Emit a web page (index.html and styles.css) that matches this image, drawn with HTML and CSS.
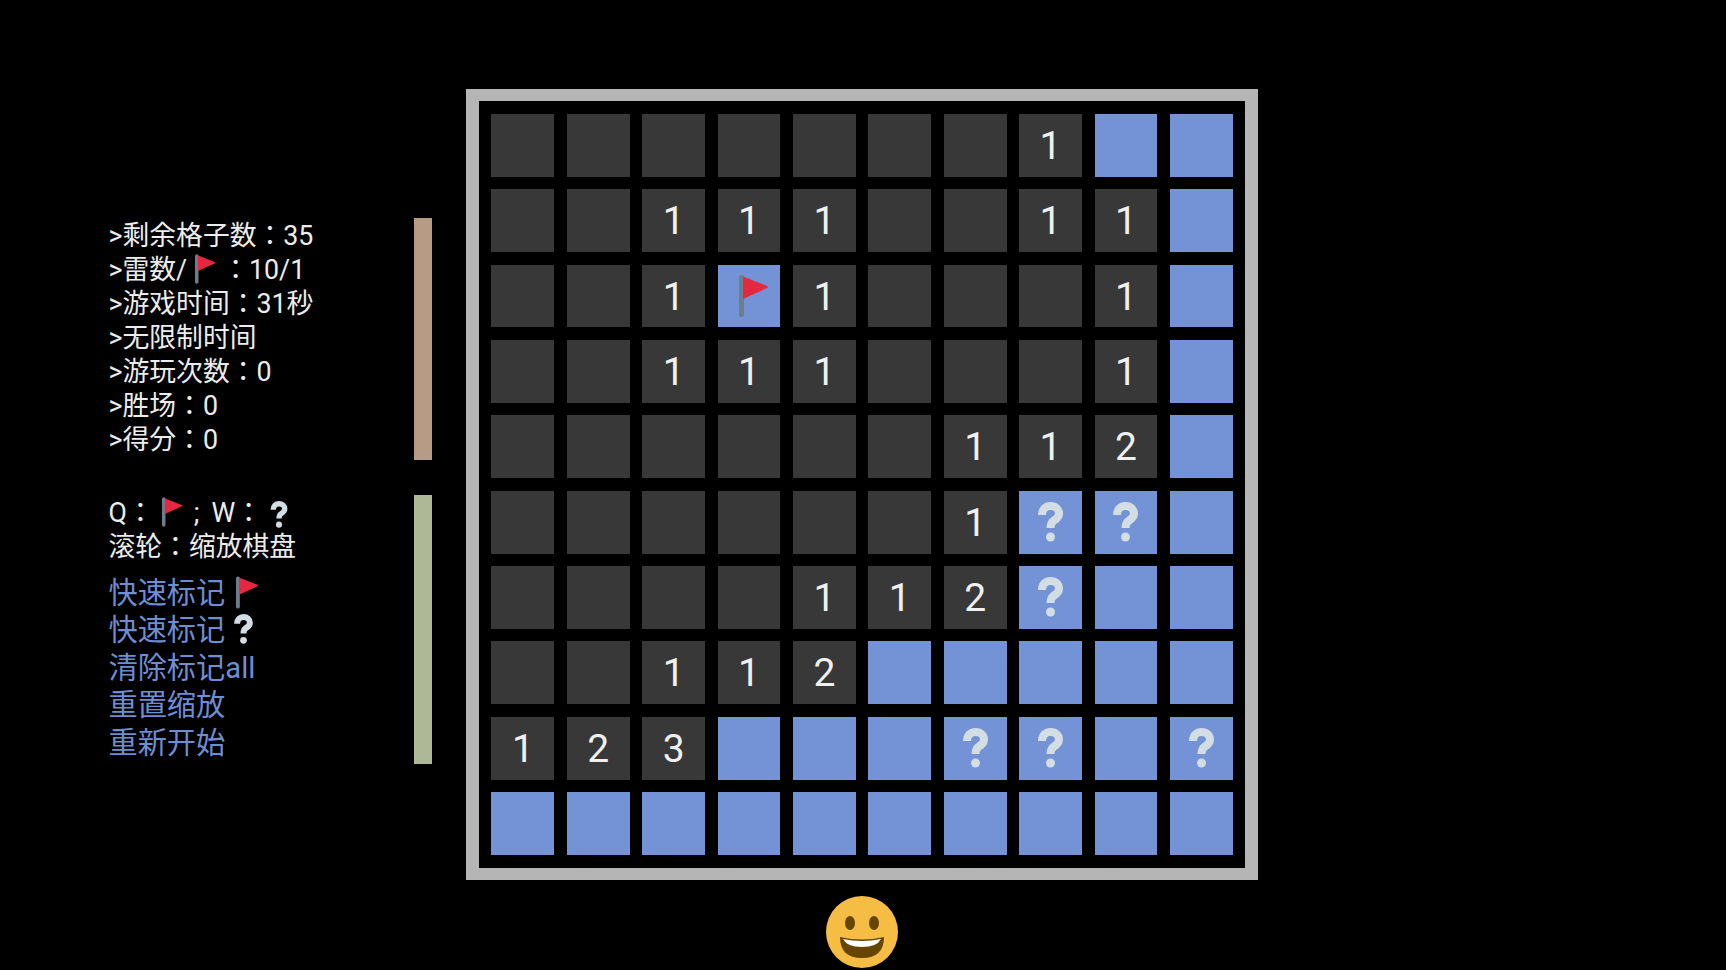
FILE: index.html
```html
<!DOCTYPE html>
<html>

<head>
    <meta charset="UTF-8">
    <title>扫雷</title>
    <link rel="stylesheet" href="styles.css">
</head>

<body>
    <svg class="defs" width="0" height="0">
        <symbol id="flag" viewBox="0 0 30 42">
            <rect x="0" y="0" width="5" height="42" rx="2.5" fill="#6b7f8a"></rect>
            <path d="M4 1.5 L28 11 Q30 12 28 13 L4 24 Z" fill="#e5283f"></path>
        </symbol>
        <symbol id="ask" viewBox="0 0 25 40">
            <path d="M4 13 C4 7 8 4 12.5 4 C17.5 4 21 7.500 21 11.500 C21 15 18.500 17 16 18.500 C13.500 20 12.500 22 12.500 26" fill="none" stroke="#d3dde4" stroke-width="8"></path>
            <circle cx="12.500" cy="35" r="4.500" fill="#d3dde4"></circle>
        </symbol>
    </svg>

    <div class="game">
        <div class="side">
            <div class="section stats">
                <div class="info">
                    <p>&gt;剩余格子数：35</p>
                    <p>&gt;雷数/<span class="slot"><svg class="icon-flag"><use href="#flag"></use></svg></span>：10/1</p>
                    <p>&gt;游戏时间：31秒</p>
                    <p>&gt;无限制时间</p>
                    <p>&gt;游玩次数：0</p>
                    <p>&gt;胜场：0</p>
                    <p>&gt;得分：0</p>
                </div>
                <div class="bar bar-brown"></div>
            </div>
            <div class="section keys">
                <div class="info">
                    <p>Q：<span class="slot"><svg class="icon-flag"><use href="#flag"></use></svg></span><span class="semi">;</span>W：<svg class="icon-ask"><use href="#ask"></use></svg></p>
                    <p>滚轮：缩放棋盘</p>
                    <ul class="links">
                        <li>快速标记<svg class="link-flag"><use href="#flag"></use></svg></li>
                        <li>快速标记<svg class="link-ask"><use href="#ask"></use></svg></li>
                        <li>清除标记all</li>
                        <li>重置缩放</li>
                        <li>重新开始</li>
                    </ul>
                </div>
                <div class="bar bar-green"></div>
            </div>
        </div>

        <div class="main">
            <div class="board">
                <div class="cell"></div><div class="cell"></div><div class="cell"></div><div class="cell"></div><div class="cell"></div><div class="cell"></div><div class="cell"></div><div class="cell">1</div><div class="cell closed"></div><div class="cell closed"></div>

                <div class="cell"></div><div class="cell"></div><div class="cell">1</div><div class="cell">1</div><div class="cell">1</div><div class="cell"></div><div class="cell"></div><div class="cell">1</div><div class="cell">1</div><div class="cell closed"></div>

                <div class="cell"></div><div class="cell"></div><div class="cell">1</div><div class="cell closed"><svg class="cell-flag"><use href="#flag"></use></svg></div><div class="cell">1</div><div class="cell"></div><div class="cell"></div><div class="cell"></div><div class="cell">1</div><div class="cell closed"></div>

                <div class="cell"></div><div class="cell"></div><div class="cell">1</div><div class="cell">1</div><div class="cell">1</div><div class="cell"></div><div class="cell"></div><div class="cell"></div><div class="cell">1</div><div class="cell closed"></div>

                <div class="cell"></div><div class="cell"></div><div class="cell"></div><div class="cell"></div><div class="cell"></div><div class="cell"></div><div class="cell">1</div><div class="cell">1</div><div class="cell">2</div><div class="cell closed"></div>

                <div class="cell"></div><div class="cell"></div><div class="cell"></div><div class="cell"></div><div class="cell"></div><div class="cell"></div><div class="cell">1</div><div class="cell closed"><svg class="cell-ask"><use href="#ask"></use></svg></div><div class="cell closed"><svg class="cell-ask"><use href="#ask"></use></svg></div><div class="cell closed"></div>

                <div class="cell"></div><div class="cell"></div><div class="cell"></div><div class="cell"></div><div class="cell">1</div><div class="cell">1</div><div class="cell">2</div><div class="cell closed"><svg class="cell-ask"><use href="#ask"></use></svg></div><div class="cell closed"></div><div class="cell closed"></div>

                <div class="cell"></div><div class="cell"></div><div class="cell">1</div><div class="cell">1</div><div class="cell">2</div><div class="cell closed"></div><div class="cell closed"></div><div class="cell closed"></div><div class="cell closed"></div><div class="cell closed"></div>

                <div class="cell">1</div><div class="cell">2</div><div class="cell">3</div><div class="cell closed"></div><div class="cell closed"></div><div class="cell closed"></div><div class="cell closed"><svg class="cell-ask"><use href="#ask"></use></svg></div><div class="cell closed"><svg class="cell-ask"><use href="#ask"></use></svg></div><div class="cell closed"></div><div class="cell closed"><svg class="cell-ask"><use href="#ask"></use></svg></div>

                <div class="cell closed"></div><div class="cell closed"></div><div class="cell closed"></div><div class="cell closed"></div><div class="cell closed"></div><div class="cell closed"></div><div class="cell closed"></div><div class="cell closed"></div><div class="cell closed"></div><div class="cell closed"></div>
            </div>

            <svg class="face" viewBox="0 0 72 72">
                <circle cx="36" cy="36" r="36" fill="#f6bd45"></circle>
                <ellipse cx="24" cy="27" rx="5" ry="7" fill="#664500"></ellipse>
                <ellipse cx="48" cy="27" rx="5" ry="7" fill="#664500"></ellipse>
                <path d="M14 41 Q36 46 58 41 Q58 62 36 62 Q14 62 14 41 Z" fill="#664500"></path>
                <path d="M17 43 Q36 47 55 43 Q51 51 36 51 Q21 51 17 43 Z" fill="#fff"></path>
            </svg>
        </div>
    </div>
</body>

</html>
```

FILE: styles.css
```css
* {
    margin: 0;
    padding: 0;
    list-style: none;
    box-sizing: border-box;
}

html,
body {
    height: 100%;
    overflow: hidden;
    background: #000;
}

body {
    font-family: Roboto, "Noto Sans CJK JP", sans-serif;
    font-size: 26.8px;
    color: #ececec;
}

.defs {
    position: absolute;
}

.game {
    display: flex;
}

/* left column */
.side {
    width: 432px;
    margin-right: 34px;
    padding: 218px 0 0 108.5px;
    display: flex;
    flex-direction: column;
    gap: 35px;
}

.section {
    display: flex;
    justify-content: space-between;
}

.stats {
    height: 242px;
}

.keys {
    height: 269px;
}

.info p {
    height: 34px;
    line-height: 37px;
    white-space: nowrap;
}

.bar {
    width: 18px;
}

.bar-brown {
    background: #b89b85;
}

.bar-green {
    background: #aeb897;
}

.slot {
    display: inline-block;
    width: 35px;
    height: 34px;
    padding-left: 8px;
    vertical-align: top;
}

.semi {
    margin: 0 12px 0 5px;
}

.icon-flag {
    width: 21px;
    height: 30px;
    margin-top: 2px;
}

.icon-ask {
    width: 18px;
    height: 27px;
    margin-left: 8px;
    vertical-align: -6px;
}

.links {
    margin-top: 9.5px;
    font-size: 29.2px;
    color: #6f8dd2;
}

.links li {
    height: 37.6px;
    line-height: 40px;
    white-space: nowrap;
}

.link-flag {
    width: 23px;
    height: 33px;
    margin-left: 11px;
    vertical-align: top;
    margin-top: 3px;
}

.link-ask {
    width: 21px;
    height: 30px;
    margin-left: 8px;
    vertical-align: top;
    margin-top: 4px;
}

/* board */
.board {
    width: 792px;
    height: 791px;
    margin-top: 89px;
    padding: 13px 12.4px;
    border: solid #b5b5b5;
    border-width: 12px 13px;
    display: grid;
    grid-template-columns: repeat(10, 62.9px);
    grid-auto-rows: 62.8px;
    gap: 12.55px 12.5px;
}

.cell {
    display: flex;
    align-items: center;
    justify-content: center;
    padding-top: 1px;
    background: #383838;
    font-size: 39px;
    color: #f0f0f0;
}

.closed {
    background: #7393d6;
}

.cell-flag {
    width: 30px;
    height: 42px;
    margin-left: 9px;
    margin-top: -2px;
}

.cell-ask {
    width: 25px;
    height: 40px;
    margin-top: -2px;
}

.face {
    display: block;
    width: 72px;
    height: 72px;
    margin: 16px auto 0;
}
```
